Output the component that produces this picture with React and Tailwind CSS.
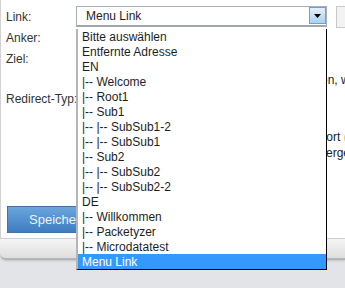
export default function App() {
  const items = [
    "Bitte auswählen",
    "Entfernte Adresse",
    "EN",
    "|-- Welcome",
    "|-- Root1",
    "|-- Sub1",
    "|-- |-- SubSub1-2",
    "|-- |-- SubSub1",
    "|-- Sub2",
    "|-- |-- SubSub2",
    "|-- |-- SubSub2-2",
    "DE",
    "|-- Willkommen",
    "|-- Packetyzer",
    "|-- Microdatatest",
    "Menu Link",
  ];
  return (
    <div className="relative w-[345px] h-[288px] overflow-hidden bg-[#e3e4e7] font-['Liberation_Sans',Arial,sans-serif] text-[12px] text-[#333]">
      <div className="h-[239px] bg-white border-l border-b border-[#d2d2d2] overflow-hidden">
        <div className="pl-[5px] pt-[6px] w-[400px]">
          <div className="flex items-center h-[21px]">
            <div className="w-[70px]">Link:</div>
            <div className="w-[251px] h-[21px] border border-[#a7aeb6] border-b-2 border-b-[#9fa6ad] bg-white flex items-center justify-between">
              <span className="pl-[9px] text-[#222]">Menu Link</span>
              <span className="w-[17px] h-[17px] mb-[1px] border border-[#7b9dc0] bg-gradient-to-b from-[#e3f0fb] to-[#a8d2f2] flex items-center justify-center">
                <svg width="7" height="4" viewBox="0 0 7 4">
                  <path d="M0 0H7L3.5 4Z" fill="#000" />
                </svg>
              </span>
            </div>
            <div className="ml-[9px] w-[30px] h-[22px] border border-[#c9c9c9] bg-[#f3f3f3]" />
          </div>
          <div className="flex items-center h-[21px]">
            <div className="w-[70px]">Anker:</div>
          </div>
          <div className="flex items-center h-[22px]">
            <div className="w-[70px]">Ziel:</div>
          </div>
          <div className="flex items-center h-[19px]">
            <div className="w-[315px]" />
            <span className="whitespace-nowrap text-[#222]">en, wenn nicht</span>
          </div>
          <div className="flex items-center h-[20px]">
            <div className="w-[70px] whitespace-nowrap">Redirect-Typ:</div>
          </div>
          <div className="h-[20px]" />
          <div className="flex items-center h-[16px]">
            <div className="w-[317px]" />
            <span className="whitespace-nowrap text-[#222]">
              fort <span className="text-[#f0a030]">(</span>
            </span>
          </div>
          <div className="flex items-center h-[16px]">
            <div className="w-[320px]" />
            <span className="whitespace-nowrap text-[#222]">ergeben</span>
          </div>
          <div className="mt-[45px] ml-px w-[110px] h-[27px] border border-[#3f73aa] bg-gradient-to-b from-[#6aa5dc] to-[#3f7dc0] flex items-center pl-[21px] text-[13px] text-[#eef4fb]">
            Speichern
          </div>
        </div>
      </div>
      <div className="h-[21px] bg-gradient-to-b from-[#f5f5f5] to-[#dedede] rounded-bl-[6px] border-b-2 border-[#b3b4b6] shadow-[0_1px_2px_rgba(0,0,0,0.15)]" />

      <div className="absolute left-[76px] top-[29px] w-[251px] bg-white border-l-2 border-l-[#b5b5b5] border-r border-b border-r-black border-b-black">
        {items.map((it, i) => (
          <div
            key={i}
            className={
              "h-[15px] leading-[16px] pl-[4px] whitespace-nowrap " +
              (i === items.length - 1 ? "bg-[#3399ff] text-white" : "text-[#1e1e1e]")
            }
          >
            {it}
          </div>
        ))}
      </div>
    </div>
  );
}
